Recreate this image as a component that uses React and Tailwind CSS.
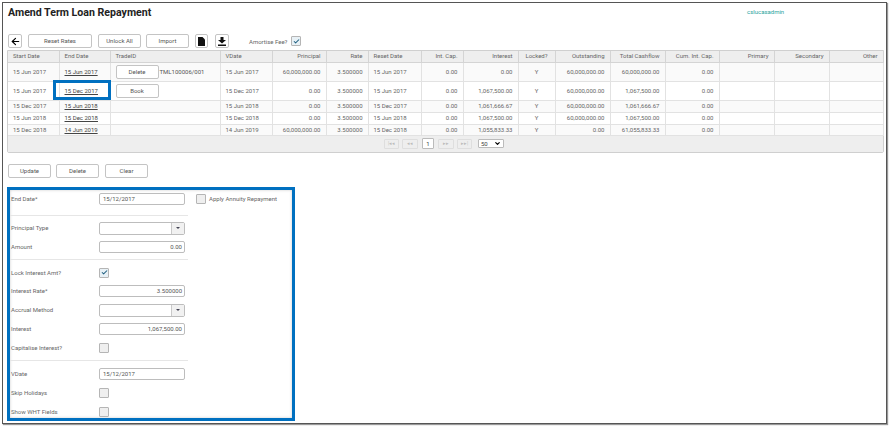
import { ArrowLeft, Check, ChevronDown } from 'lucide-react'

const columns = [
  { name: 'Start Date', w: 'w-[51px]', align: 'text-left' },
  { name: 'End Date', w: 'w-[51px]', align: 'text-left' },
  { name: 'TradeID', w: 'w-[110px]', align: 'text-left' },
  { name: 'VDate', w: 'w-[52px]', align: 'text-left' },
  { name: 'Principal', w: 'w-[54px]', align: 'text-right' },
  { name: 'Rate', w: 'w-[42px]', align: 'text-right' },
  { name: 'Reset Date', w: 'w-[53px]', align: 'text-left' },
  { name: 'Int. Cap.', w: 'w-[42px]', align: 'text-right' },
  { name: 'Interest', w: 'w-[55px]', align: 'text-right' },
  { name: 'Locked?', w: 'w-[37px]', align: 'text-center' },
  { name: 'Outstanding', w: 'w-[55px]', align: 'text-right' },
  { name: 'Total Cashflow', w: 'w-[55px]', align: 'text-right' },
  { name: 'Cum. Int. Cap.', w: 'w-[54px]', align: 'text-right' },
  { name: 'Primary', w: 'w-[55px]', align: 'text-right' },
  { name: 'Secondary', w: 'w-[55px]', align: 'text-right' },
  { name: 'Other', w: 'w-[54px]', align: 'text-right' },
]

const rows = [
  { h: 'h-[19px]', bg: 'bg-[#fafafa]', trade: 'Delete', tradeId: 'TML100006/001', cells: ['15 Jun 2017', '15 Jun 2017', '', '15 Jun 2017', '60,000,000.00', '3.500000', '15 Jun 2017', '0.00', '0.00', 'Y', '60,000,000.00', '60,000,000.00', '0.00', '', '', ''] },
  { h: 'h-[19px]', bg: 'bg-white', trade: 'Book', cells: ['15 Jun 2017', '15 Dec 2017', '', '15 Dec 2017', '0.00', '3.500000', '15 Jun 2017', '0.00', '1,067,500.00', 'Y', '60,000,000.00', '1,067,500.00', '0.00', '', '', ''] },
  { h: 'h-[12px]', bg: 'bg-[#fafafa]', cells: ['15 Dec 2017', '15 Jun 2018', '', '15 Jun 2018', '0.00', '3.500000', '15 Dec 2017', '0.00', '1,061,666.67', 'Y', '60,000,000.00', '1,061,666.67', '0.00', '', '', ''] },
  { h: 'h-[12px]', bg: 'bg-white', cells: ['15 Jun 2018', '15 Dec 2018', '', '15 Dec 2018', '0.00', '3.500000', '15 Jun 2018', '0.00', '1,067,500.00', 'Y', '60,000,000.00', '1,067,500.00', '0.00', '', '', ''] },
  { h: 'h-[11px]', bg: 'bg-[#fafafa]', cells: ['15 Dec 2018', '14 Jun 2019', '', '14 Jun 2019', '60,000,000.00', '3.500000', '15 Dec 2018', '0.00', '1,055,833.33', 'Y', '0.00', '61,055,833.33', '0.00', '', '', ''] },
]

const Btn = ({ children, className = '' }) => (
  <button className={`h-[14px] border border-[#c4c4c4] rounded-[2px] bg-white text-[6px] leading-none text-[#555] flex items-center justify-center ${className}`}>
    {children}
  </button>
)

const Tick = ({ checked, className = '' }) => (
  <span className={`w-[10px] h-[10px] border border-[#b5b5b5] rounded-[1px] flex items-center justify-center shrink-0 ${checked ? 'bg-[#e8f1f6]' : 'bg-[#efefef]'} ${className}`}>
    {checked && <Check size={7} strokeWidth={3.5} className="text-[#1f5f80]" />}
  </span>
)

const Label = ({ children }) => (
  <span className="w-[88px] shrink-0 text-[6px] leading-none text-[#666]">{children}</span>
)

const Input = ({ value, right }) => (
  <span className={`w-[86px] h-[12px] border border-[#bdbdbd] rounded-[2px] bg-white px-[2px] text-[6px] leading-[10px] text-[#555] ${right ? 'text-right' : 'text-left pl-[3px]'}`}>
    {value}
  </span>
)

const Select = () => (
  <span className="w-[86px] h-[13px] border border-[#bdbdbd] rounded-[2px] bg-white flex justify-end">
    <span className="w-[13px] h-full border-l border-[#c9c9c9] bg-[#f1f1f1] flex items-center justify-center">
      <span className="w-0 h-0 border-x-[2px] border-x-transparent border-t-[2px] border-t-[#445]" />
    </span>
  </span>
)

const Row = ({ label, className = '', children }) => (
  <div className={`flex items-center ${className}`}>
    <Label>{label}</Label>
    {children}
  </div>
)

const Rule = ({ className = '' }) => <div className={`w-[178px] -ml-[1px] border-t border-[#e6e6e6] ${className}`} />

const Pager = ({ children, className = '' }) => (
  <span className={`h-[10px] border border-[#dedede] rounded-[1px] bg-[#eeeeee] text-[4.5px] leading-[8px] text-center text-[#bbb] ${className}`}>
    {children}
  </span>
)

export default function App() {
  return (
    <div className="w-[891px] h-[428px] bg-white pt-[2px] pl-[2px] font-['Roboto',sans-serif]">
      <div className="relative w-[885px] h-[422px] border border-[#555] shadow-[1px_1px_1px_#999] pl-[4px]">
        {/* Title */}
        <div className="flex items-start h-[31px]">
          <h1 className="pt-[2px] text-[10.6px] leading-[16px] font-bold text-[#222] w-[740px] pl-[1px]">Amend Term Loan Repayment</h1>
          <span className="pt-[4px] text-[6px] leading-[10px] text-[#2aa5a0]">cslucasadmin</span>
        </div>

        {/* Toolbar */}
        <div className="flex items-center h-[14px] pl-[1px]">
          <Btn className="w-[14px] border-[#888]"><ArrowLeft size={11} strokeWidth={2.5} className="text-black" /></Btn>
          <Btn className="w-[64px] ml-[6px]">Reset Rates</Btn>
          <Btn className="w-[43px] ml-[6px]">Unlock All</Btn>
          <Btn className="w-[43px] ml-[5px]">Import</Btn>
          <Btn className="w-[13px] ml-[6px] border-[#888]">
            <svg width="7" height="9" viewBox="0 0 7 9"><path d="M0 0h4.5L7 2.5V9H0z" fill="#111" /></svg>
          </Btn>
          <Btn className="w-[14px] ml-[7px] border-[#888]">
            <svg width="8" height="9" viewBox="0 0 8 9"><path d="M2.5 0h3v3H8L4 6.6 0 3h2.5zM0 7.5h8V9H0z" fill="#111" /></svg>
          </Btn>
          <span className="ml-[20px] w-[38px] text-[6px] text-[#666] whitespace-nowrap">Amortise Fee?</span>
          <Tick checked className="ml-[4px]" />
        </div>

        {/* Repayment schedule */}
        <div className="mt-[2px] w-[877px] border border-[#cfcfcf] rounded-b-[2px] text-[6px] leading-none text-[#666]">
          <table className="w-[875px] table-fixed border-collapse">
            <colgroup>
              {columns.map((col) => <col key={col.name} className={col.w} />)}
            </colgroup>
            <thead>
              <tr className="h-[11px] bg-[#eeeeee]">
                {columns.map((col) => (
                  <th key={col.name} className={`border-r border-b border-[#d4d4d4] px-[5px] font-normal ${col.align}`}>{col.name}</th>
                ))}
              </tr>
            </thead>
            <tbody>
              {rows.map((row, r) => (
                <tr key={r} className={`${row.h} ${row.bg}`}>
                  {row.cells.map((cell, c) => {
                    const col = columns[c]
                    if (c === 2) {
                      return (
                        <td key={c} className="border-r border-b border-[#e2e2e2] pl-[5px]">
                          {row.trade && (
                            <span className="flex items-center">
                              <Btn className="w-[43px]">{row.trade}</Btn>
                              {row.tradeId && <span className="ml-[1px] text-[#555]">{row.tradeId}</span>}
                            </span>
                          )}
                        </td>
                      )
                    }
                    return (
                      <td key={c} className={`border-r border-b border-[#e2e2e2] px-[5px] whitespace-nowrap ${col.align} ${c === 1 ? 'underline text-[#444]' : ''}`}>
                        {cell}
                      </td>
                    )
                  })}
                </tr>
              ))}
            </tbody>
          </table>
          <div className="h-[16px] bg-[#eeeeee] flex items-center pl-[376px]">
            <Pager className="w-[15px]">|◂◂</Pager>
            <Pager className="w-[16px] ml-[3px]">◂◂</Pager>
            <span className="ml-[4px] w-[12px] h-[11px] border border-[#bbb] rounded-[1px] bg-white text-center leading-[9px] text-[#444]">1</span>
            <Pager className="w-[16px] ml-[4px]">▸▸</Pager>
            <Pager className="w-[15px] ml-[3px]">▸▸|</Pager>
            <span className="ml-[6px] w-[26px] h-[9px] border border-[#bbb] rounded-[1px] bg-white flex items-center justify-between px-[2px] text-[#444]">
              50
              <ChevronDown size={7} strokeWidth={4} className="text-black" />
            </span>
          </div>
        </div>

        {/* Form actions */}
        <div className="flex items-center h-[14px] mt-[11px] pl-[1px]">
          <Btn className="w-[43px]">Update</Btn>
          <Btn className="w-[43px] ml-[5px]">Delete</Btn>
          <Btn className="w-[43px] ml-[6px]">Clear</Btn>
        </div>

        {/* Period form */}
        <div className="mt-[9px] w-[288px] h-[234px] border-[3px] border-[#0070c0] pl-[1px] pt-[3px] shadow-[inset_0_0_3px_#ccc]">
          <Row label="End Date*" className="h-[12px]">
            <Input value="15/12/2017" />
            <Tick className="ml-[11px]" />
            <span className="ml-[3px] text-[6px] text-[#666]">Apply Annuity Repayment</span>
          </Row>
          <Rule className="mt-[10px]" />
          <Row label="Principal Type" className="h-[13px] mt-[6px]"><Select /></Row>
          <Row label="Amount" className="h-[12px] mt-[6px]"><Input value="0.00" right /></Row>
          <Rule className="mt-[6px]" />
          <Row label="Lock Interest Amt?" className="h-[10px] mt-[8px]"><Tick checked /></Row>
          <Row label="Interest Rate*" className="h-[12px] mt-[7px]"><Input value="3.500000" right /></Row>
          <Row label="Accrual Method" className="h-[13px] mt-[7px]"><Select /></Row>
          <Row label="Interest" className="h-[12px] mt-[6px]"><Input value="1,067,500.00" right /></Row>
          <Row label="Capitalise Interest?" className="h-[10px] mt-[8px]"><Tick /></Row>
          <Rule className="mt-[7px]" />
          <Row label="VDate" className="h-[12px] mt-[7px]"><Input value="15/12/2017" /></Row>
          <Row label="Skip Holidays" className="h-[10px] mt-[8px]"><Tick /></Row>
          <Row label="Show WHT Fields" className="h-[10px] mt-[9px]"><Tick /></Row>
        </div>

        {/* Highlight over the selected End Date */}
        <div className="absolute left-[50px] top-[77px] w-[58px] h-[20px] border-[3px] border-[#0070c0]" />
      </div>
    </div>
  )
}
